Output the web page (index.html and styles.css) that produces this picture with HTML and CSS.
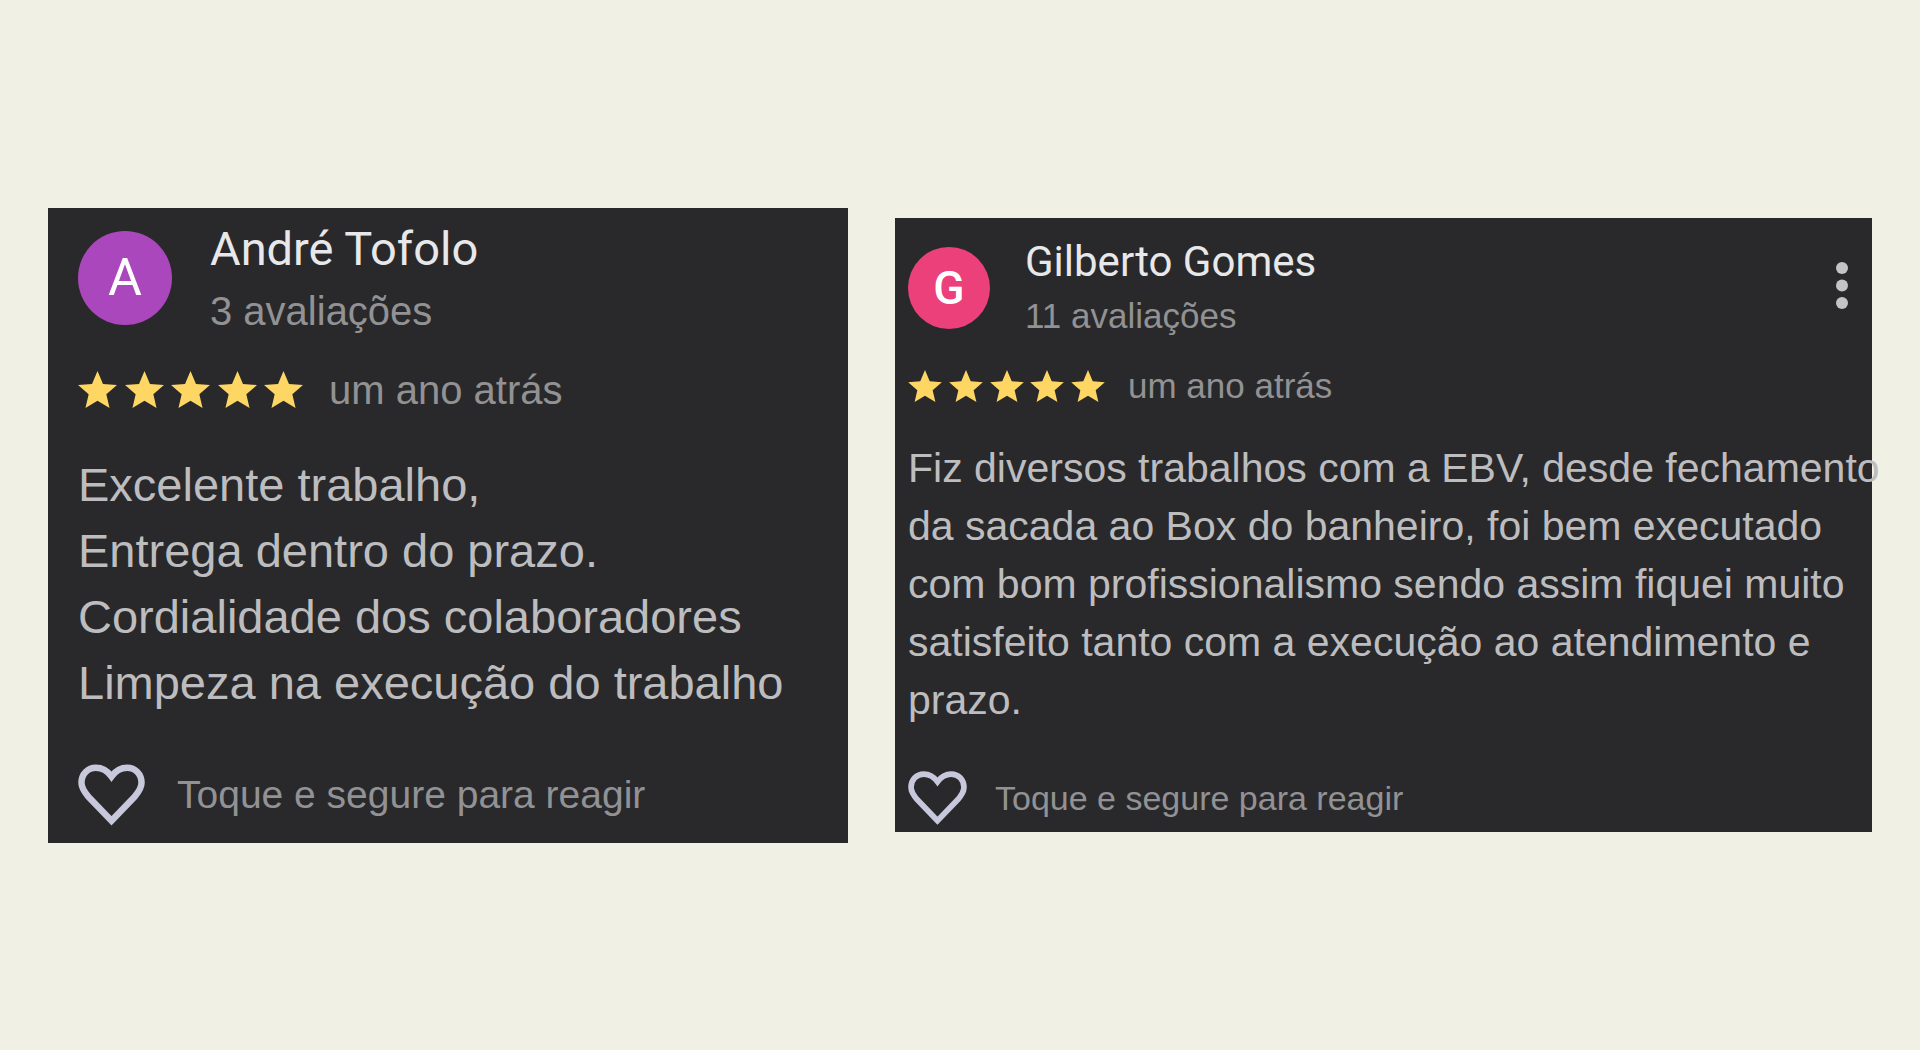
FILE: index.html
```html
<!DOCTYPE html>
<html lang="pt-BR">
<head>
<meta charset="utf-8">
<meta name="viewport" content="width=device-width, initial-scale=1">
<title>Avaliações</title>
<link rel="stylesheet" href="styles.css">
</head>
<body>
<svg class="defs" aria-hidden="true">
  <symbol id="star" viewBox="2 2 20 19"><path d="M12 17.27 18.18 21l-1.64-7.03L22 9.24l-7.19-.61L12 2 9.19 8.63 2 9.24l5.46 4.73L5.82 21z"/></symbol>
  <symbol id="heart" viewBox="0 0 58 53"><path d="M29 48.8 9 28C5 23.500 3 20 3 16 3 8.500 8.500 3 15.500 3 21 3 25.500 5.800 29 10.500 32.500 5.800 37 3 42.500 3 49.500 3 55 8.500 55 16c0 4-2 7.500-6 12z" fill="none" stroke="currentColor" stroke-width="5.6"/></symbol>
</svg>
<main class="reviews">
  <article class="card card-large">
    <header class="author">
      <span class="avatar avatar-purple" aria-hidden="true">A</span>
      <div class="who">
        <h2 class="name">André Tofolo</h2>
        <p class="count">3 avaliações</p>
      </div>
    </header>
    <div class="rating">
      <span class="stars" role="img" aria-label="5 de 5 estrelas">
        <svg class="star"><use href="#star"/></svg>
        <svg class="star"><use href="#star"/></svg>
        <svg class="star"><use href="#star"/></svg>
        <svg class="star"><use href="#star"/></svg>
        <svg class="star"><use href="#star"/></svg>
      </span>
      <span class="when">um ano atrás</span>
    </div>
    <p class="text">Excelente trabalho,<br>Entrega dentro do prazo.<br>Cordialidade dos colaboradores<br>Limpeza na execução do trabalho</p>
    <button class="react" type="button"><svg class="heart" aria-hidden="true"><use href="#heart"/></svg><span>Toque e segure para reagir</span></button>
  </article>

  <article class="card card-small">
    <header class="author">
      <span class="avatar avatar-pink" aria-hidden="true">G</span>
      <div class="who">
        <h2 class="name">Gilberto Gomes</h2>
        <p class="count">11 avaliações</p>
      </div>
      <button class="more" type="button" aria-label="Mais opções"><svg class="dots" viewBox="0 0 12 48"><circle cx="6" cy="6" r="6"/><circle cx="6" cy="23.500" r="6"/><circle cx="6" cy="41" r="6"/></svg></button>
    </header>
    <div class="rating">
      <span class="stars" role="img" aria-label="5 de 5 estrelas">
        <svg class="star"><use href="#star"/></svg>
        <svg class="star"><use href="#star"/></svg>
        <svg class="star"><use href="#star"/></svg>
        <svg class="star"><use href="#star"/></svg>
        <svg class="star"><use href="#star"/></svg>
      </span>
      <span class="when">um ano atrás</span>
    </div>
    <p class="text">Fiz diversos trabalhos com a EBV, desde fechamento<br>da sacada ao Box do banheiro, foi bem executado<br>com bom profissionalismo sendo assim fiquei muito<br>satisfeito tanto com a execução ao atendimento e<br>prazo.</p>
    <button class="react" type="button"><svg class="heart" aria-hidden="true"><use href="#heart"/></svg><span>Toque e segure para reagir</span></button>
  </article>
</main>
</body>
</html>
```
FILE: styles.css
```css
* {
  box-sizing: border-box;
}

body {
  margin: 0;
  background: #f1f0e4;
  font-family: "Liberation Sans", Arial, sans-serif;
}

.defs {
  display: none;
}

.reviews {
  display: grid;
  grid-template-columns: minmax(0, 800fr) minmax(0, 977fr);
  align-items: center;
  gap: 47px;
  min-height: 100vh;
  padding: 0 48px;
}

.card {
  background: #29292b;
  color: #bdbdbf;
}

.card-large {
  padding: 13px 0 17px 30px;
}

.card-small {
  padding: 19px 0 7px 13px;
}

.author {
  display: flex;
  align-items: flex-start;
}

.avatar {
  display: flex;
  flex: none;
  align-items: center;
  justify-content: center;
  margin-top: 10px;
  border-radius: 50%;
  color: #fff;
  font-family: Roboto, sans-serif;
}

.avatar-purple {
  background: #ab47bc;
}

.avatar-pink {
  background: #ec407a;
  font-weight: 500;
}

.name,
.count,
.text {
  margin: 0;
}

.name {
  color: #e8e8ea;
  font-family: Roboto, sans-serif;
  font-weight: 400;
}

.count,
.when,
.react {
  color: #929294;
}

.rating,
.stars,
.react {
  display: flex;
  align-items: center;
}

.stars {
  justify-content: space-between;
}

.star {
  fill: #fdd663;
}

.text {
  white-space: nowrap;
}

.react,
.more {
  padding: 0;
  border: 0;
  background: none;
  font-family: inherit;
}

.heart {
  color: #c8c8dc;
}

.more {
  display: flex;
  justify-content: center;
  width: 24px;
  margin: 25px 18px 0 auto;
}

.dots {
  width: 12px;
  height: 48px;
  fill: #c4c4c6;
}

.card-large .avatar {
  width: 94px;
  height: 94px;
  font-size: 52px;
}

.card-large .who {
  margin-left: 38px;
}

.card-large .name {
  font-size: 47px;
  line-height: 56px;
}

.card-large .count {
  margin-top: 4px;
  font-size: 40px;
  line-height: 60px;
}

.card-large .rating {
  gap: 26px;
  margin-top: 25px;
  font-size: 40px;
  line-height: 48px;
}

.card-large .stars {
  width: 225px;
}

.card-large .star {
  width: 39px;
  height: 37px;
}

.card-large .text {
  margin-top: 38px;
  font-size: 47px;
  line-height: 66px;
}

.card-large .react {
  gap: 32px;
  margin-top: 48px;
  font-size: 39px;
  line-height: 48px;
}

.card-large .heart {
  width: 67px;
  height: 62px;
}

.card-small .avatar {
  width: 82px;
  height: 82px;
  font-size: 46px;
}

.card-small .who {
  margin-left: 35px;
}

.card-small .name {
  font-size: 42px;
  line-height: 50px;
}

.card-small .count {
  margin-top: 2px;
  font-size: 35px;
  line-height: 54px;
}

.card-small .rating {
  gap: 23px;
  margin-top: 22px;
  font-size: 35px;
  line-height: 42px;
}

.card-small .stars {
  width: 197px;
}

.card-small .star {
  width: 34px;
  height: 32px;
}

.card-small .text {
  margin-top: 32px;
  font-size: 41px;
  line-height: 58px;
}

.card-small .react {
  gap: 28px;
  margin-top: 42px;
  font-size: 34px;
  line-height: 42px;
}

.card-small .heart {
  width: 59px;
  height: 54px;
}
```
